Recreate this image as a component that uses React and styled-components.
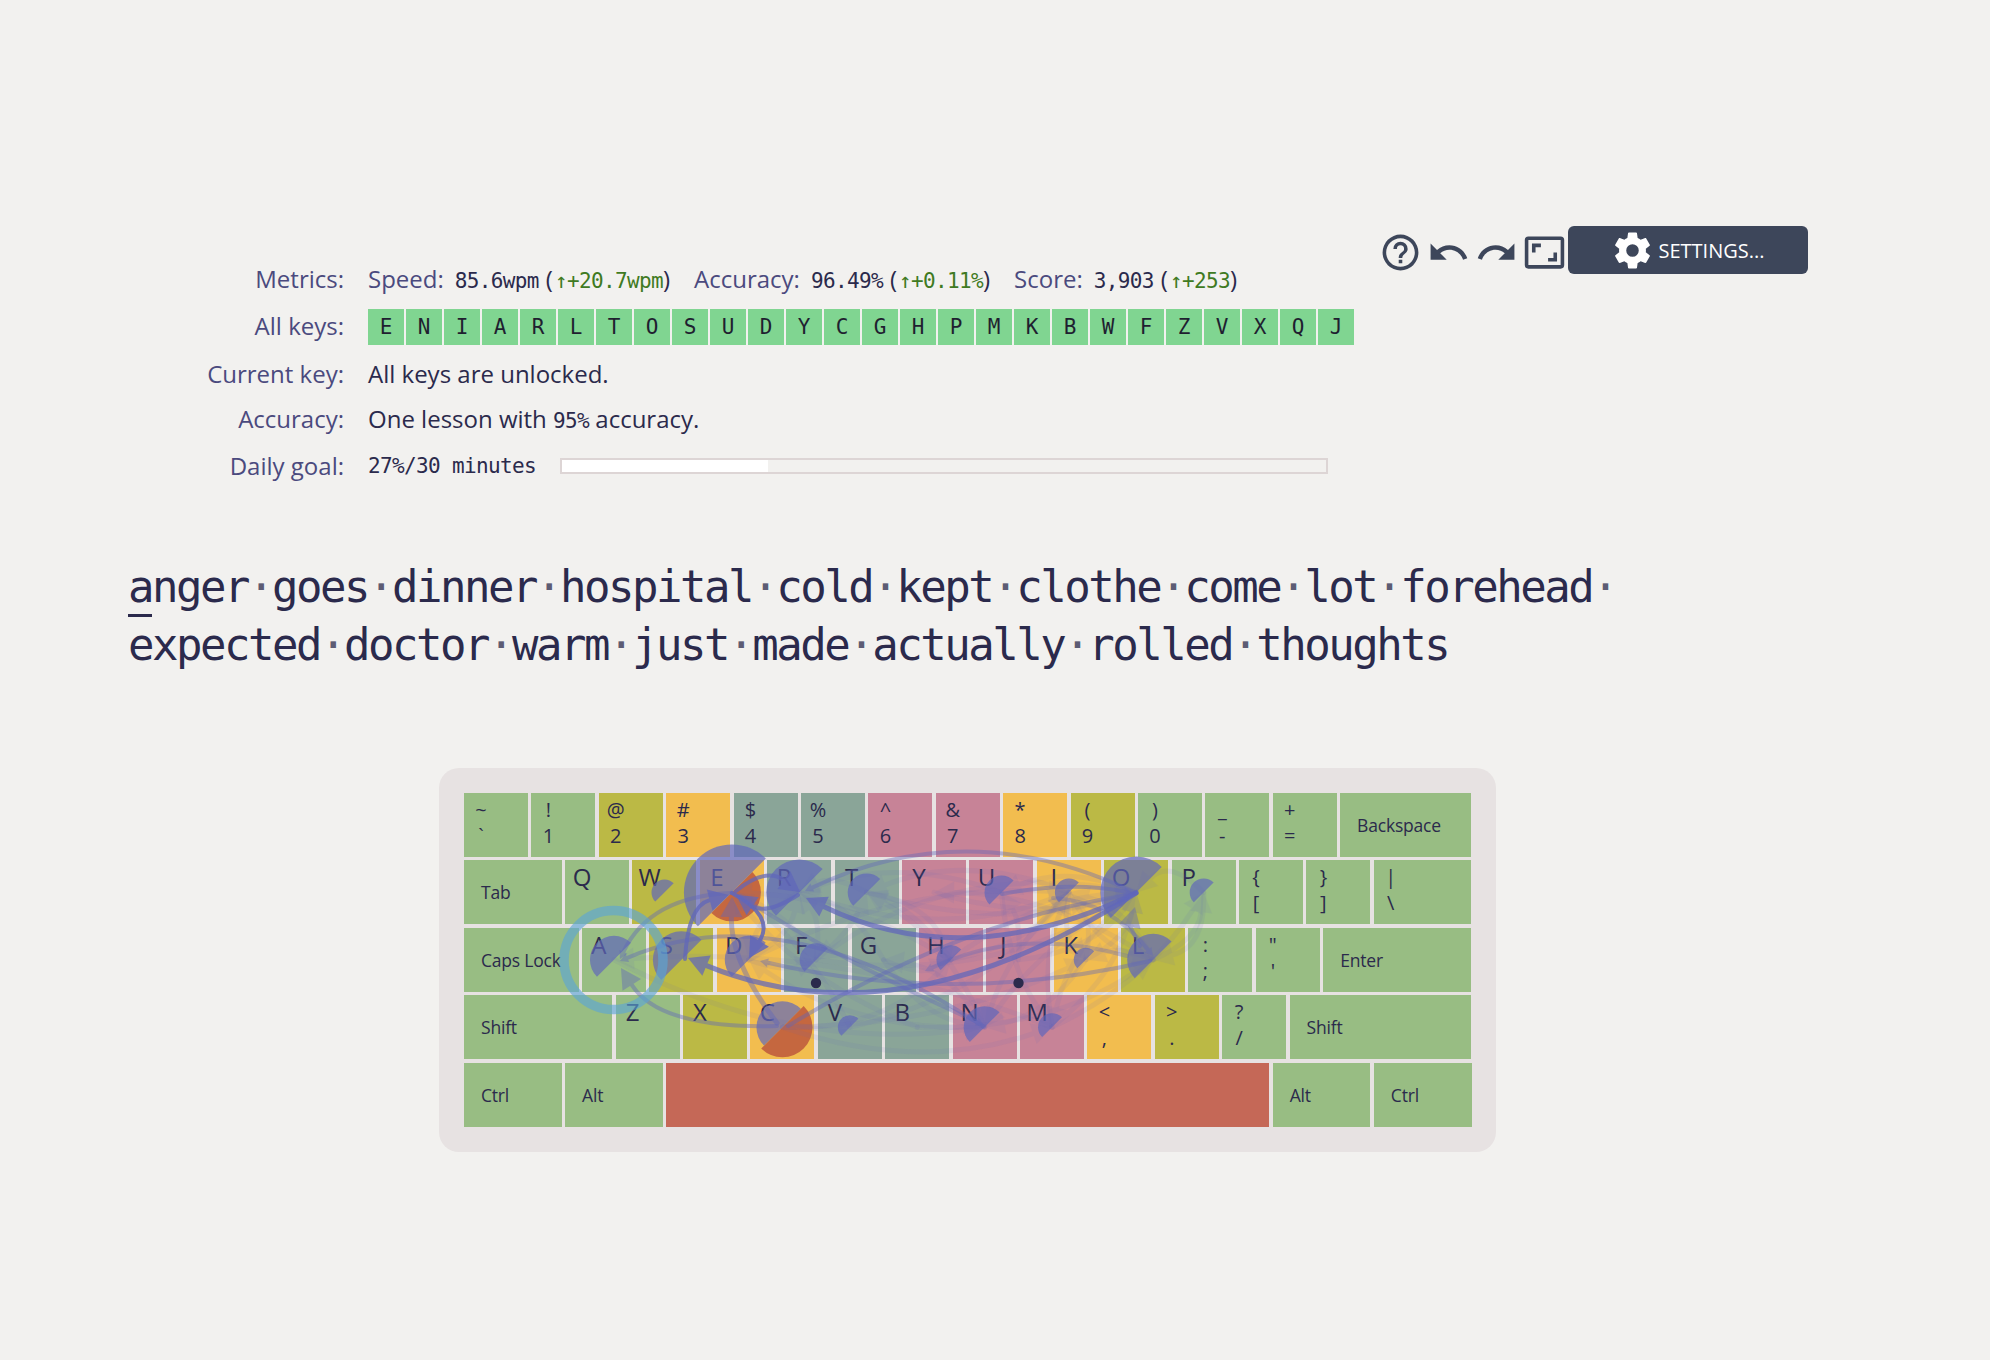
import React from 'react';
import styled, { createGlobalStyle } from 'styled-components';

const UI_FONT = '"Open Sans", "Noto Sans", sans-serif';
const MONO_FONT = '"DejaVu Sans Mono", "Liberation Mono", monospace';
const UNIT = 67.4;
const GAP = 3.4;

const GlobalStyle = createGlobalStyle`
    body{
        margin: 0;
        background: #f2f1ef;
        color: #2b2a4c;
        font-family: ${UI_FONT};
    }
`;

const Page = styled('div')`
    box-sizing: border-box;
    min-height: 1360px;
    padding: 226px 182px 0 128px;
    overflow: hidden;
`;

const Top = styled('div')`
    display: flex;
    align-items: flex-start;
    justify-content: space-between;
`;

const Stats = styled('div')`
    display: grid;
    grid-template-columns: 216px auto;
    grid-template-rows: 44px 54px 38px 52px 44px;
    column-gap: 24px;
    align-items: center;
    margin-top: 30px;
    font-size: 24px;
`;

const Label = styled('div')`
    margin-bottom: ${p => p.$lift || 0}px;
    text-align: right;
    color: #4b4a7e;
`;

const Value = styled('div')`
    display: flex;
    align-items: center;
`;

const Metric = styled('span')`
    display: inline-flex;
    align-items: baseline;
    margin-right: 24px;
    white-space: pre;
`;

const MetricName = styled('span')`
    color: #4b4a7e;
    margin-right: 11px;
`;

const Mono = styled('span')`
    font-family: ${MONO_FONT};
    font-size: 21px;
    letter-spacing: -0.64px;
`;

const Delta = styled(Mono)`
    color: #3f7a22;
`;

const Paren = styled('span')`
    margin: 0 2px 0 7px;
`;

const Chips = styled('div')`
    display: flex;
    gap: 2px;
`;

const Chip = styled('span')`
    width: 36px;
    height: 36px;
    display: flex;
    align-items: center;
    justify-content: center;
    background: #80d591;
    color: #1f1f30;
    font-family: ${MONO_FONT};
    font-size: 21px;
`;

const Sentence = styled('span')`
    white-space: pre;
`;

const Progress = styled('div')`
    box-sizing: border-box;
    width: 768px;
    height: 16px;
    margin-left: 24px;
    border: 2px solid #ddd5d5;
`;

const ProgressFill = styled('div')`
    height: 100%;
    background: #fff;
`;

const Toolbar = styled('div')`
    display: flex;
    align-items: flex-start;
`;

const IconButton = styled('span')`
    width: 48px;
    height: 48px;
    margin-top: 2px;
    display: flex;
    align-items: center;
    justify-content: center;
    color: #3d465a;
`;

const SettingsButton = styled('div')`
    box-sizing: border-box;
    width: 240px;
    height: 48px;
    display: flex;
    align-items: center;
    justify-content: center;
    gap: 4px;
    background: #3d465a;
    border-radius: 6px;
    color: #fff;
    font-size: 20px;
`;

const Lesson = styled('div')`
    margin-top: 70px;
    font-family: ${MONO_FONT};
    font-size: 44px;
    line-height: 58px;
    letter-spacing: -2.49px;
    white-space: pre;
`;

const Cursor = styled('span')`
    position: relative;
    &::after{
        content: '';
        position: absolute;
        left: 0;
        right: 0;
        bottom: -5px;
        height: 3px;
        background: #2b2a4c;
    }
`;

const Dot = styled('span')`
    color: #5d5c74;
`;

const Keyboard = styled('div')`
    position: relative;
    box-sizing: border-box;
    width: 1057px;
    height: 384px;
    margin: 94px 0 0 311px;
    padding: 25px;
    display: flex;
    flex-direction: column;
    gap: ${GAP}px;
    background: #e7e2e2;
    border-radius: 20px;
`;

const KeyRow = styled('div')`
    display: flex;
    gap: ${GAP}px;
`;

const tones = {
    g: '#98bd83',
    o: '#bbb945',
    y: '#f2bd4f',
    t: '#8aa598',
    p: '#c78397',
    r: '#c56857',
};

const Key = styled('div')`
    box-sizing: border-box;
    flex: none;
    width: ${p => p.$u * UNIT - GAP}px;
    height: 64px;
    background: ${p => tones[p.$tone]};
    color: #2b2a4c;
`;

const Letter = styled('div')`
    width: 34px;
    text-align: center;
    font-size: 24px;
    line-height: 33px;
`;

const Symbols = styled('div')`
    width: 34px;
    padding-top: 4px;
    text-align: center;
    font-size: 20px;
    line-height: 26px;
`;

const Caption = styled('div')`
    padding-left: 17px;
    font-size: 17.5px;
    line-height: 64px;
    letter-spacing: -0.2px;
    white-space: nowrap;
`;

const Overlay = styled('svg')`
    position: absolute;
    left: 0;
    top: 0;
    width: 1057px;
    height: 384px;
    pointer-events: none;
`;

const sym = (top, bottom, tone) => ({ top, bottom, tone, u: 1 });
const let_ = (letter, tone) => ({ letter, tone, u: 1, id: letter });
const cap = (caption, u, tone = 'g') => ({ caption, u, tone });

const rows = [
    [sym('~', '`', 'g'), sym('!', '1', 'g'), sym('@', '2', 'o'), sym('#', '3', 'y'), sym('$', '4', 't'), sym('%', '5', 't'), sym('^', '6', 'p'), sym('&', '7', 'p'), sym('*', '8', 'y'), sym('(', '9', 'o'), sym(')', '0', 'g'), sym('_', '-', 'g'), sym('+', '=', 'g'), cap('Backspace', 2)],
    [cap('Tab', 1.5), let_('Q', 'g'), let_('W', 'o'), let_('E', 'y'), let_('R', 't'), let_('T', 't'), let_('Y', 'p'), let_('U', 'p'), let_('I', 'y'), let_('O', 'o'), let_('P', 'g'), sym('{', '[', 'g'), sym('}', ']', 'g'), { ...sym('|', '\\', 'g'), u: 1.5 }],
    [cap('Caps Lock', 1.75), let_('A', 'g'), let_('S', 'o'), let_('D', 'y'), let_('F', 't'), let_('G', 't'), let_('H', 'p'), let_('J', 'p'), let_('K', 'y'), let_('L', 'o'), sym(':', ';', 'g'), sym('"', "'", 'g'), cap('Enter', 2.25)],
    [cap('Shift', 2.25), let_('Z', 'g'), let_('X', 'o'), let_('C', 'y'), let_('V', 't'), let_('B', 't'), let_('N', 'p'), let_('M', 'p'), sym('<', ',', 'y'), sym('>', '.', 'o'), sym('?', '/', 'g'), cap('Shift', 2.75)],
    [cap('Ctrl', 1.5), cap('Alt', 1.5), cap('', 9, 'r'), cap('Alt', 1.5), cap('Ctrl', 1.5)],
];

// key centres in page coordinates, the overlay's viewBox uses the same ones
const centres = {};
rows.forEach((row, r) => {
    let x = 464;
    row.forEach(key => {
        if (key.id) centres[key.id] = [x + (UNIT - GAP) / 2, 792 + r * UNIT + 32];
        x += key.u * UNIT;
    });
});

const wedges = [
    ['W', 13], ['E', 48, 29], ['R', 33], ['T', 19], ['U', 17], ['I', 14], ['O', 36], ['P', 14],
    ['A', 24], ['S', 28.5], ['D', 24], ['F', 16.5], ['H', 14.5], ['K', 12], ['L', 26],
    ['V', 12], ['C', 26, 30], ['N', 21], ['M', 14],
];

// main transitions: start, control, tip, width, opacity, head size
const strong = [
    [[1136, 892], [966, 974], [806, 897], 5, 0.72, 20],
    [[1136, 892], [901, 1044], [688, 957], 5, 0.72, 20],
    [[732, 892], [775, 915], [749, 957], 4, 0.85, 20],
    [[685, 958], [688, 905], [729, 894], 4, 0.75, 20],
    [[736, 890], [766, 866], [800, 891], 4, 0.72, 20],
    [[798, 894], [766, 914], [736, 894], 4, 0.72, 20],
    [[732, 892], [650, 895], [620, 958], 4, 0.42, 8],
    [[984, 1026], [781, 891], [620, 960], 4, 0.42, 8],
    [[777, 1025], [660, 1028], [621, 967], 4, 0.42, 20],
    [[777, 1022], [730, 960], [732, 896], 5, 0.42, 20],
    [[788, 1025], [958, 921], [1134, 893], 4, 0.42, 8],
    [[1136, 892], [970, 812], [805, 890], 4, 0.4, 8],
    [[1140, 945], [1130, 925], [1135, 906], 4, 0.42, 20],
    [[1127, 955], [1020, 925], [925, 970], 4, 0.32, 8],
    [[1002, 893], [1070, 880], [1132, 892], 4, 0.45, 8],
    [[1053, 897], [1110, 900], [1153, 955], 4, 0.32, 8],
    [[1150, 960], [955, 1005], [760, 960], 4, 0.4, 8],
    [[740, 895], [840, 960], [984, 1024], 4, 0.35, 8],
];

const faint = [
    ['H', 'E', 30], ['T', 'H', -30], ['I', 'N', 20], ['N', 'G', 30], ['O', 'N', 24], ['A', 'N', 60], ['N', 'D', -40],
    ['R', 'I', 50], ['I', 'T', 40], ['T', 'O', 40], ['O', 'U', 28], ['U', 'R', 36], ['L', 'I', 24], ['I', 'L', 24],
    ['K', 'I', 16], ['I', 'K', 16], ['K', 'O', 20], ['M', 'O', 28], ['O', 'M', 28], ['M', 'I', -20], ['J', 'U', 12],
    ['U', 'M', 20], ['H', 'I', 24], ['H', 'O', -30], ['Y', 'O', 30], ['L', 'Y', 34], ['N', 'T', 30], ['F', 'O', 60],
    ['O', 'F', 70], ['D', 'I', -44], ['G', 'H', 16], ['F', 'R', 14], ['R', 'D', 18], ['D', 'R', 18], ['E', 'F', -18],
    ['T', 'R', 18], ['G', 'R', 22], ['V', 'E', 24], ['B', 'E', -30], ['C', 'K', 34], ['C', 'M', 46], ['V', 'I', 44],
    ['M', 'P', 30], ['P', 'L', -34], ['L', 'P', 24], ['P', 'O', 34], ['L', 'K', 14], ['K', 'N', -24], ['G', 'N', 26],
    ['C', 'H', 40], ['H', 'T', 16], ['F', 'T', 10], ['D', 'F', 12], ['J', 'O', 30], ['M', 'A', 50], ['B', 'L', 40],
];

const wedgePath = (x, y, r, sweep) => {
    const d = r * Math.SQRT1_2;
    return `M${x + d} ${y - d}A${r} ${r} 0 0 ${sweep} ${x - d} ${y + d}Z`;
};

const Arrow = ({ from, control, to, width, opacity, head = 20 }) => {
    const dx = to[0] - control[0];
    const dy = to[1] - control[1];
    const len = Math.hypot(dx, dy) || 1;
    const ux = dx / len;
    const uy = dy / len;
    const bx = to[0] - ux * head;
    const by = to[1] - uy * head;
    const half = head * 0.55;
    return (
        <g opacity={opacity} fill="#6067bb" stroke="none">
            <path d={`M${from[0]} ${from[1]}Q${control[0]} ${control[1]} ${bx} ${by}`} fill="none" stroke="#6067bb" strokeWidth={width} strokeLinecap="round" />
            <path d={`M${to[0]} ${to[1]}L${bx - uy * half} ${by + ux * half}L${bx + uy * half} ${by - ux * half}Z`} />
        </g>
    );
};

const bend = (from, to, amount) => {
    const mx = (from[0] + to[0]) / 2;
    const my = (from[1] + to[1]) / 2;
    const dx = to[0] - from[0];
    const dy = to[1] - from[1];
    const len = Math.hypot(dx, dy) || 1;
    return [mx - dy / len * amount, my + dx / len * amount];
};

const KeyOverlay = () => (
    <Overlay viewBox="439 767 1057 384">
        {wedges.map(([id, blue, orange]) => {
            const [x, y] = centres[id];
            return (
                <g key={id}>
                    {orange && <path d={wedgePath(x, y, orange, 1)} fill="#b9513b" fillOpacity="0.8" />}
                    <path d={wedgePath(x, y, blue, 0)} fill="#6067bb" fillOpacity="0.69" />
                </g>
            );
        })}
        {faint.map(([a, b, amount], i) => (
            <Arrow key={i} from={centres[a]} control={bend(centres[a], centres[b], amount)} to={centres[b]} width={5} opacity={0.09} />
        ))}
        {strong.map(([from, control, to, width, opacity, head], i) => (
            <Arrow key={i} from={from} control={control} to={to} width={width} opacity={opacity} head={head} />
        ))}
        <circle cx="816" cy="982" r="5.2" fill="#2b2a4c" />
        <circle cx="1018.5" cy="982" r="5.2" fill="#2b2a4c" />
        <circle cx="613.5" cy="959" r="49.5" fill="none" stroke="#5aa5d7" strokeOpacity="0.62" strokeWidth="9.5" />
    </Overlay>
);

const Icon = ({ d, size = 43 }) => (
    <svg width={size} height={size} viewBox="0 0 24 24" fill="currentColor">
        <path d={d} />
    </svg>
);

const HELP = 'M11,18H13V16H11V18M12,2A10,10 0 0,0 2,12A10,10 0 0,0 12,22A10,10 0 0,0 22,12A10,10 0 0,0 12,2M12,20C7.59,20 4,16.41 4,12C4,7.59 7.59,4 12,4C16.41,4 20,7.59 20,12C20,16.41 16.41,20 12,20M12,6A4,4 0 0,0 8,10H10A2,2 0 0,1 12,8A2,2 0 0,1 14,10C14,12 11,11.75 11,15H13C13,12.75 16,12.5 16,10A4,4 0 0,0 12,6Z';
const UNDO = 'M12.5,8C9.85,8 7.45,9 5.6,10.6L2,7V16H11L7.38,12.38C8.77,11.22 10.54,10.5 12.5,10.5C16.04,10.5 19.05,12.81 20.1,16L22.47,15.22C21.08,11.03 17.15,8 12.5,8Z';
const REDO = 'M18.4,10.6C16.55,9 14.15,8 11.5,8C6.85,8 2.92,11.03 1.54,15.22L3.9,16C4.95,12.81 7.95,10.5 11.5,10.5C13.45,10.5 15.23,11.22 16.62,12.38L13,16H22V7L18.4,10.6Z';
const ASPECT = 'M19,12H17V15H14V17H19V12M7,9H10V7H5V12H7V9M21,3H3A2,2 0 0,0 1,5V19A2,2 0 0,0 3,21H21A2,2 0 0,0 23,19V5A2,2 0 0,0 21,3M21,19H3V5H21V19Z';
const COG = 'M12,15.5A3.5,3.5 0 0,1 8.5,12A3.5,3.5 0 0,1 12,8.5A3.5,3.5 0 0,1 15.5,12A3.5,3.5 0 0,1 12,15.5M19.43,12.97C19.47,12.65 19.5,12.33 19.5,12C19.5,11.67 19.47,11.34 19.43,11L21.54,9.37C21.73,9.22 21.78,8.95 21.66,8.73L19.66,5.27C19.54,5.05 19.27,4.96 19.05,5.05L16.56,6.05C16.04,5.66 15.5,5.32 14.87,5.07L14.5,2.42C14.46,2.18 14.25,2 14,2H10C9.75,2 9.54,2.18 9.5,2.42L9.13,5.07C8.5,5.32 7.96,5.66 7.44,6.05L4.95,5.05C4.73,4.96 4.46,5.05 4.34,5.27L2.34,8.73C2.21,8.95 2.27,9.22 2.46,9.37L4.57,11C4.53,11.34 4.5,11.67 4.5,12C4.5,12.33 4.53,12.65 4.57,12.97L2.46,14.63C2.27,14.78 2.21,15.05 2.34,15.27L4.34,18.73C4.46,18.95 4.73,19.03 4.95,18.95L7.44,17.94C7.96,18.34 8.5,18.68 9.13,18.93L9.5,21.58C9.54,21.82 9.75,22 10,22H14C14.25,22 14.46,21.82 14.5,21.58L14.87,18.93C15.5,18.67 16.04,18.34 16.56,17.94L19.05,18.95C19.27,19.03 19.54,18.95 19.66,18.73L21.66,15.27C21.78,15.05 21.73,14.78 21.54,14.63L19.43,12.97Z';

const metrics = [
    { name: 'Speed:', value: '85.6wpm', delta: '↑+20.7wpm' },
    { name: 'Accuracy:', value: '96.49%', delta: '↑+0.11%' },
    { name: 'Score:', value: '3,903', delta: '↑+253' },
];

const lines = [
    'nger goes dinner hospital cold kept clothe come lot forehead ',
    'expected doctor warm just made actually rolled thoughts',
];

const LessonLine = ({ text }) => (
    <>
        {text.split(' ').map((word, i) => (
            <React.Fragment key={i}>
                {i > 0 && <Dot>·</Dot>}
                {word}
            </React.Fragment>
        ))}
    </>
);

const App = () => {
    return (
        <Page>
            <GlobalStyle />
            <Top>
                <Stats>
                    <Label>Metrics:</Label>
                    <Value>
                        {metrics.map(m => (
                            <Metric key={m.name}>
                                <MetricName>{m.name}</MetricName>
                                <Mono>{m.value}</Mono>
                                <Paren>(</Paren>
                                <Delta>{m.delta}</Delta>
                                <span>)</span>
                            </Metric>
                        ))}
                    </Value>
                    <Label $lift={4}>All keys:</Label>
                    <Chips>
                        {'ENIARLTOSUDYCGHPMKBWFZVXQJ'.split('').map(c => <Chip key={c}>{c}</Chip>)}
                    </Chips>
                    <Label>Current key:</Label>
                    <Value>All keys are unlocked.</Value>
                    <Label>Accuracy:</Label>
                    <Value>
                        <Sentence>One lesson with <Mono>95%</Mono> accuracy.</Sentence>
                    </Value>
                    <Label $lift={2}>Daily goal:</Label>
                    <Value>
                        <Mono>27%/30 minutes</Mono>
                        <Progress>
                            <ProgressFill style={{ width: '27%' }} />
                        </Progress>
                    </Value>
                </Stats>
                <Toolbar>
                    <IconButton><Icon d={HELP} /></IconButton>
                    <IconButton><Icon d={UNDO} /></IconButton>
                    <IconButton><Icon d={REDO} /></IconButton>
                    <IconButton><Icon d={ASPECT} /></IconButton>
                    <SettingsButton><Icon d={COG} />SETTINGS...</SettingsButton>
                </Toolbar>
            </Top>
            <Lesson>
                <div><Cursor>a</Cursor><LessonLine text={lines[0]} /></div>
                <div><LessonLine text={lines[1]} /></div>
            </Lesson>
            <Keyboard>
                {rows.map((row, r) => (
                    <KeyRow key={r}>
                        {row.map((key, i) => (
                            <Key key={i} $u={key.u} $tone={key.tone}>
                                {key.letter && <Letter>{key.letter}</Letter>}
                                {key.top && <Symbols>{key.top}<br />{key.bottom}</Symbols>}
                                {key.caption && <Caption>{key.caption}</Caption>}
                            </Key>
                        ))}
                    </KeyRow>
                ))}
                <KeyOverlay />
            </Keyboard>
        </Page>
    );
};

export default App;
